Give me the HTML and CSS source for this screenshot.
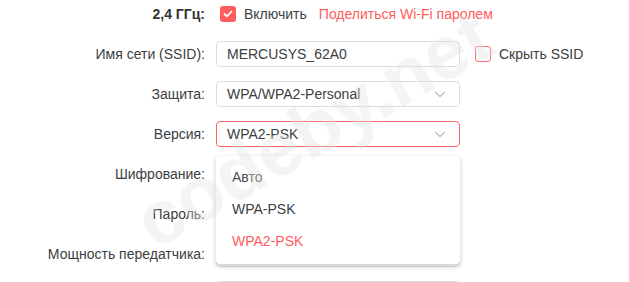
FILE: index.html
```html
<!DOCTYPE html>
<html lang="ru">
<head>
    <meta charset="UTF-8">
    <meta name="viewport" content="width=device-width, initial-scale=1.0">
    <title>Беспроводной режим</title>
    <link rel="stylesheet" href="styles.css">
</head>
<body>
    <div class="wifi-form">
        <div class="form-row">
            <label class="row-label band-label">2,4 ГГц:</label>
            <div class="row-field">
                <span class="check check-on">
                    <svg width="10" height="8" viewBox="0 0 10 8"><path d="M1.5 4 L4 6.3 L8.5 1.5" fill="none" stroke="#fff" stroke-width="1.8" stroke-linecap="round" stroke-linejoin="round"/></svg>
                </span>
                <span class="check-text">Включить</span>
                <a class="share-link" href="#">Поделиться Wi-Fi паролем</a>
            </div>
        </div>

        <div class="form-row">
            <label class="row-label">Имя сети (SSID):</label>
            <div class="row-field">
                <div class="text-box">MERCUSYS_62A0</div>
                <span class="check check-off"></span>
                <span class="check-text">Скрыть SSID</span>
            </div>
        </div>

        <div class="form-row">
            <label class="row-label">Защита:</label>
            <div class="row-field">
                <div class="select-box">
                    <span>WPA/WPA2-Personal</span>
                    <svg class="chevron" width="12" height="7" viewBox="0 0 12 7"><path d="M1 1 L6 5.5 L11 1" fill="none" stroke="#c3c3c3" stroke-width="1.5"/></svg>
                </div>
            </div>
        </div>

        <div class="form-row">
            <label class="row-label">Версия:</label>
            <div class="row-field">
                <div class="select-box select-open">
                    <span>WPA2-PSK</span>
                    <svg class="chevron" width="12" height="7" viewBox="0 0 12 7"><path d="M1 1 L6 5.5 L11 1" fill="none" stroke="#c3c3c3" stroke-width="1.5"/></svg>
                    <ul class="dropdown">
                        <li>Авто</li>
                        <li>WPA-PSK</li>
                        <li class="selected">WPA2-PSK</li>
                    </ul>
                </div>
            </div>
        </div>

        <div class="form-row">
            <label class="row-label">Шифрование:</label>
            <div class="row-field"><div class="select-box"></div></div>
        </div>

        <div class="form-row">
            <label class="row-label">Пароль:</label>
            <div class="row-field"><div class="text-box"></div></div>
        </div>

        <div class="form-row">
            <label class="row-label">Мощность передатчика:</label>
            <div class="row-field"><div class="select-box"></div></div>
        </div>

        <div class="form-row">
            <label class="row-label"></label>
            <div class="row-field"><div class="select-box"></div></div>
        </div>
    </div>

    <div class="watermark">codeby.net</div>
</body>
</html>
```

FILE: styles.css
```css
body {
    margin: 0;
    font-family: "Liberation Sans", Arial, sans-serif;
    font-size: 14px;
    color: #3b3e42;
    background-color: #fff;
    overflow: hidden;
}
.wifi-form {
    display: flex;
    flex-direction: column;
    gap: 14px;
    padding-top: 1px;
}
.form-row {
    display: flex;
    align-items: center;
    height: 26px;
}
.row-label {
    width: 205px;
    text-align: right;
    margin-right: 11px;
    white-space: nowrap;
}
.band-label {
    font-weight: bold;
    color: #333;
}
.row-field {
    display: flex;
    align-items: center;
}
.check {
    width: 16px;
    height: 16px;
    box-sizing: border-box;
    border-radius: 3px;
    display: inline-flex;
    align-items: center;
    justify-content: center;
}
.check-on {
    background-color: #ff5c5c;
    margin-left: 4px;
}
.check-off {
    border: 1px solid #ff6b6b;
    margin-left: 15px;
}
.check-text {
    margin-left: 8px;
}
.share-link {
    margin-left: 12px;
    color: #ff5c5c;
    text-decoration: none;
}
.text-box,
.select-box {
    position: relative;
    width: 244px;
    height: 26px;
    box-sizing: border-box;
    border: 1px solid #dcdcdc;
    border-radius: 4px;
    padding: 0 10px;
    display: flex;
    align-items: center;
    background-color: #fff;
}
.select-box span {
    flex: 1;
}
.chevron {
    margin-right: 3px;
}
.select-open {
    border-color: #ff6464;
}
.dropdown {
    position: absolute;
    top: 34px;
    left: -1px;
    width: 244px;
    box-sizing: border-box;
    margin: 0;
    padding: 5px 0 7px;
    list-style: none;
    background-color: #fff;
    border-radius: 4px;
    box-shadow: 0 2px 5px rgba(0, 0, 0, 0.22);
    z-index: 2;
}
.dropdown li {
    height: 32px;
    line-height: 32px;
    padding-left: 16px;
    color: #3b3e42;
}
.dropdown li:first-child {
    color: #4a4a4a;
}
.dropdown li.selected {
    color: #ff5c5c;
}
/* водяной знак поверх формы */
.watermark {
    position: absolute;
    left: 53px;
    top: 85px;
    width: 520px;
    text-align: center;
    font-family: "Liberation Sans", Arial, sans-serif;
    font-size: 76px;
    font-weight: bold;
    color: rgba(225, 225, 225, 0.38);
    transform: rotate(-30deg);
    pointer-events: none;
    z-index: 5;
    white-space: nowrap;
}
```
